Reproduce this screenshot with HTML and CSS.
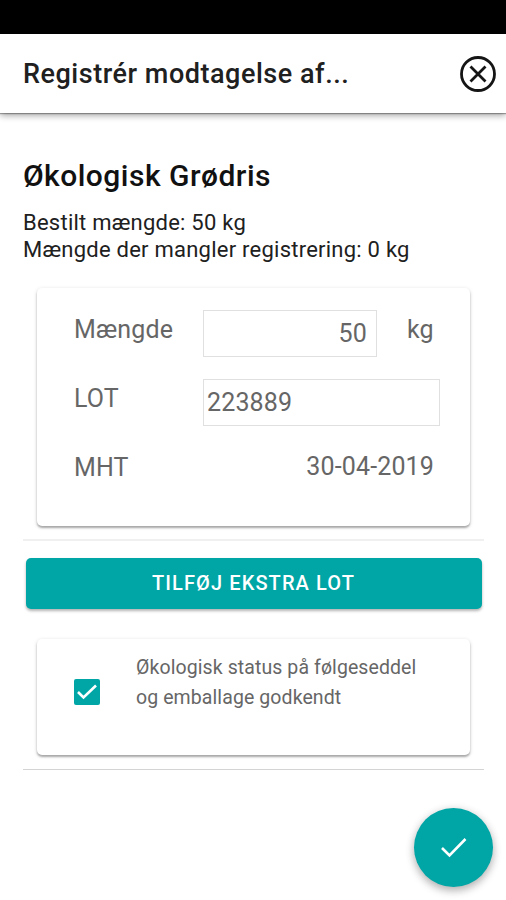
FILE: index.html
```html
<!DOCTYPE html>
<html lang="da">
<head>
<meta charset="utf-8">
<title>Registrér modtagelse</title>
<link rel="stylesheet" href="styles.css">
</head>
<body>
<div class="status"></div>
<header class="toolbar">
  <h1 class="title"><span>Registrér modtagelse af...</span></h1>
  <svg class="close" viewBox="0 0 38 38"><circle cx="19" cy="19" r="16.5"/><path d="M11.5 11.5L26.5 26.5M26.5 11.5L11.5 26.5"/></svg>
</header>
<main class="content">
  <h2 class="product"><span>Økologisk Grødris</span></h2>
  <p class="info"><span>Bestilt mængde: 50 kg</span></p>
  <p class="info"><span>Mængde der mangler registrering: 0 kg</span></p>
  <section class="card lot">
    <div class="row"><span class="label">Mængde</span><div class="field amount"><span>50</span></div><span class="unit">kg</span></div>
    <div class="row"><span class="label">LOT</span><div class="field number"><span>223889</span></div></div>
    <div class="row"><span class="label">MHT</span><span class="date">30-04-2019</span></div>
  </section>
  <div class="divider"></div>
  <button class="add"><span>TILFØJ EKSTRA LOT</span></button>
  <section class="card approve">
    <svg class="check" viewBox="0 0 26 26"><rect width="26" height="26" rx="2"/><path d="M4 13L9.5 18.5L22 6.5"/></svg>
    <p class="approval"><span>Økologisk status på følgeseddel</span><br><span>og emballage godkendt</span></p>
  </section>
  <div class="divider last"></div>
</main>
<button class="fab"><svg viewBox="0 0 28 22"><path d="M2 11L9.5 18.5L25.5 2"/></svg></button>
</body>
</html>
```

FILE: styles.css
```css
* { box-sizing: border-box; }
body { margin: 0; height: 900px; overflow: hidden; background: #fff; font-family: Roboto, sans-serif; color: #202020; position: relative; }
h1, h2, p { margin: 0; }
.status { height: 34px; background: #000; }
.toolbar { height: 79px; display: flex; align-items: center; justify-content: space-between; padding: 0 9px 0 23px; box-shadow: 0 1px 1px rgba(0,0,0,.3), 0 2px 7px rgba(0,0,0,.4); }
.title { font-size: 27px; font-weight: 500; line-height: 36px; letter-spacing: .53px; white-space: nowrap; }
.close { width: 38px; height: 38px; fill: none; stroke: #151515; stroke-width: 2.8; }
.content { padding: 45px 23px 0; }
.product { font-size: 30px; line-height: 36px; font-weight: 500; letter-spacing: .48px; color: #111; margin-bottom: 15px; white-space: nowrap; }
.info { font-size: 22px; line-height: 27px; letter-spacing: .24px; white-space: nowrap; }
.card { margin: 0 13px 0 14px; border-radius: 5px; background: #fff; box-shadow: 0 2px 2px rgba(0,0,0,.28), 0 1px 4px rgba(0,0,0,.14); color: #666; }
.lot { height: 238px; margin-top: 25px; padding: 22px 30px 0 37px; }
.row { display: flex; height: 69px; font-size: 25px; line-height: 40px; letter-spacing: .15px; }
.label { width: 129px; }
.field { height: 47px; border: 1.5px solid #e0e0e0; line-height: 46px; padding: 0 3px; }
.amount { width: 174px; text-align: right; padding-right: 9px; }
.number { width: 237px; }
.unit { margin-left: 30px; }
.date { margin-left: auto; margin-right: 6px; line-height: 38px; }
.divider { height: 2px; background: #f0f0f0; margin-top: 13px; margin-right: -1px; }
.add { display: block; width: 456px; height: 51px; margin: 17px 0 0 2.5px; border: 0; border-radius: 5px; background: #00a5a6; color: #fff; font: 500 20px/48px Roboto, sans-serif; letter-spacing: 1.1px; padding: 0 0 2px; box-shadow: 0 2px 3px rgba(0,0,0,.3); }
.approve { height: 116px; margin-top: 30px; display: flex; padding: 14px 0 0 36.5px; }
.check { width: 26px; height: 26px; margin-top: 26px; fill: #00a5a6; flex: none; }
.check path, .fab path { fill: none; stroke: #fff; stroke-width: 2.6; }
.approval { margin-left: 36.5px; font-size: 19.5px; line-height: 29.5px; letter-spacing: .09px; white-space: nowrap; }
.last { height: 1px; background: #d4d4d4; margin-top: 14px; }
.fab { position: absolute; left: 414px; top: 808px; width: 79px; height: 79px; border: 0; padding: 0; border-radius: 50%; background: #00a5a6; display: grid; place-items: center; box-shadow: 0 4px 8px rgba(0,0,0,.25), 0 1px 10px rgba(0,0,0,.1); }
.fab svg { width: 28px; height: 22px; }
```
